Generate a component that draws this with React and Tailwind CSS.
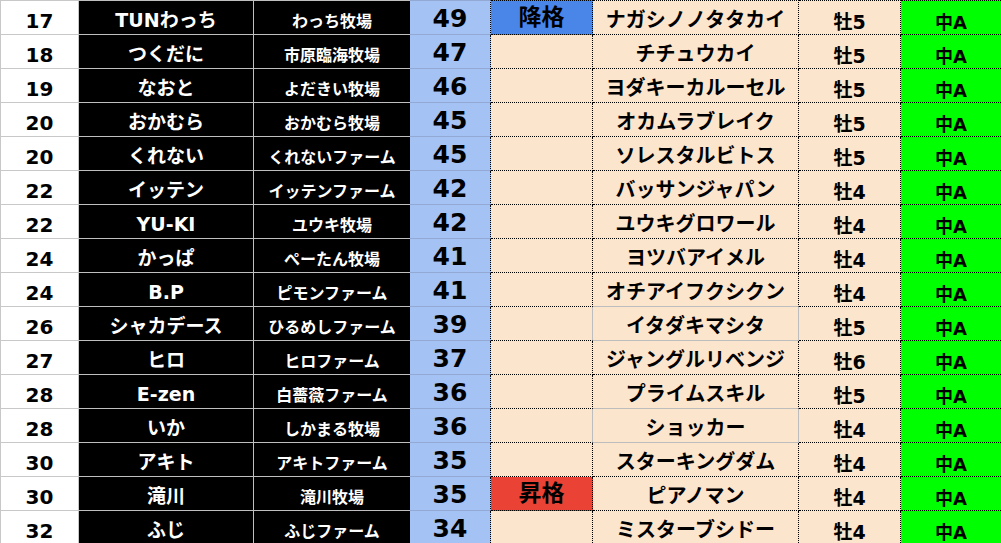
const ROWS = [
  { rank: '17', name: 'TUNわっち', farm: 'わっち牧場', pt: 49, badge: 'down', horse: 'ナガシノノタタカイ', sex: '牡5' },
  { rank: '18', name: 'つくだに', farm: '市原臨海牧場', pt: 47, horse: 'チチュウカイ', sex: '牡5' },
  { rank: '19', name: 'なおと', farm: 'よだきい牧場', pt: 46, horse: 'ヨダキーカルーセル', sex: '牡5' },
  { rank: '20', name: 'おかむら', farm: 'おかむら牧場', pt: 45, horse: 'オカムラブレイク', sex: '牡5' },
  { rank: '20', name: 'くれない', farm: 'くれないファーム', pt: 45, horse: 'ソレスタルビトス', sex: '牡5' },
  { rank: '22', name: 'イッテン', farm: 'イッテンファーム', pt: 42, horse: 'バッサンジャパン', sex: '牡4' },
  { rank: '22', name: 'YU-KI', farm: 'ユウキ牧場', pt: 42, horse: 'ユウキグロワール', sex: '牡4' },
  { rank: '24', name: 'かっぱ', farm: 'ぺーたん牧場', pt: 41, horse: 'ヨツバアイメル', sex: '牡4' },
  { rank: '24', name: 'B.P', farm: 'ピモンファーム', pt: 41, horse: 'オチアイフクシクン', sex: '牡4', grayBottom: true },
  { rank: '26', name: 'シャカデース', farm: 'ひるめしファーム', pt: 39, horse: 'イタダキマシタ', sex: '牡5', graySides: true, grayBottom: true },
  { rank: '27', name: 'ヒロ', farm: 'ヒロファーム', pt: 37, horse: 'ジャングルリベンジ', sex: '牡6' },
  { rank: '28', name: 'E-zen', farm: '白薔薇ファーム', pt: 36, horse: 'プライムスキル', sex: '牡5', grayBottom: true },
  { rank: '28', name: 'いか', farm: 'しかまる牧場', pt: 36, horse: 'ショッカー', sex: '牡4', graySides: true, grayBottom: true },
  { rank: '30', name: 'アキト', farm: 'アキトファーム', pt: 35, horse: 'スターキングダム', sex: '牡4' },
  { rank: '30', name: '滝川', farm: '滝川牧場', pt: 35, badge: 'up', horse: 'ピアノマン', sex: '牡4' },
  { rank: '32', name: 'ふじ', farm: 'ふじファーム', pt: 34, horse: 'ミスターブシドー', sex: '牡4' },
];

// Excel-ish borders: dotted black for the pale orange block, gray gridlines elsewhere
const DOT_R = 'border-r border-r-black [border-right-style:dotted]';
const DOT_B = 'border-b border-b-black [border-bottom-style:dotted]';
const DOT_T = 'border-t border-t-black [border-top-style:dotted]';
const GRAY_R = 'border-r border-r-[#bdbdbd]';
const GRAY_B = 'border-b border-b-[#bdbdbd]';

function Row({ r, first }) {
  const cell = 'flex shrink-0 items-end justify-center leading-none font-bold whitespace-nowrap';
  return (
    <div className="flex">
      <div className={`${cell} w-[78px] bg-white border-r border-b border-[#c8c8c8] pb-[3px] text-[20px] text-black ${first ? 'border-t' : ''}`}>
        {r.rank}
      </div>
      <div className={`${cell} w-[175px] bg-black border-r border-b border-[#bfbfbf] pb-[4px] text-[19px] text-white ${first ? 'border-t' : ''}`}>
        {r.name}
      </div>
      <div className={`${cell} w-[156px] bg-black border-b border-[#bfbfbf] pb-[4px] text-[16px] text-white ${first ? 'border-t' : ''}`}>
        {r.farm}
      </div>
      <div className={`${cell} w-[81px] bg-[#a4c2f4] border-b border-[#93a8d2] ${DOT_R} pb-[3px] text-[25px] text-black ${first ? 'border-t' : ''}`}>
        {r.pt}
      </div>
      <div
        className={`${cell} w-[102px] ${r.graySides ? GRAY_R : DOT_R} ${DOT_B} pb-[5px] text-[23px] text-black ${first ? DOT_T : ''} ${
          r.badge === 'down' ? 'bg-[#4a86e8]' : r.badge === 'up' ? 'bg-[#ea4335]' : 'bg-[#fce5cd]'
        }`}
      >
        {r.badge === 'down' ? '降格' : r.badge === 'up' ? '昇格' : ''}
      </div>
      <div className={`${cell} w-[206px] bg-[#fce5cd] ${r.graySides ? GRAY_R : DOT_R} ${r.grayBottom ? GRAY_B : DOT_B} pb-[4px] text-[20px] text-black ${first ? DOT_T : ''}`}>
        {r.horse}
      </div>
      <div className={`${cell} w-[102px] bg-[#fce5cd] ${DOT_R} ${DOT_B} pb-[2px] text-[19px] text-black ${first ? DOT_T : ''}`}>
        {r.sex}
      </div>
      <div className={`${cell} flex-1 bg-[#00ff00] ${DOT_B} pb-[2px] text-[18px] text-black ${first ? DOT_T : ''}`}>
        中A
      </div>
    </div>
  );
}

export default function App() {
  return (
    <div className="h-[543px] w-[1001px] overflow-hidden bg-white font-['DejaVu_Sans','Noto_Sans_CJK_JP',sans-serif]">
      <div className="flex flex-col border-l border-[#c8c8c8] [&>div>div]:h-[34px] [&>div:first-child>div]:h-[35px]">
        {ROWS.map((r, i) => (
          <Row key={i} r={r} first={i === 0} />
        ))}
      </div>
    </div>
  );
}
